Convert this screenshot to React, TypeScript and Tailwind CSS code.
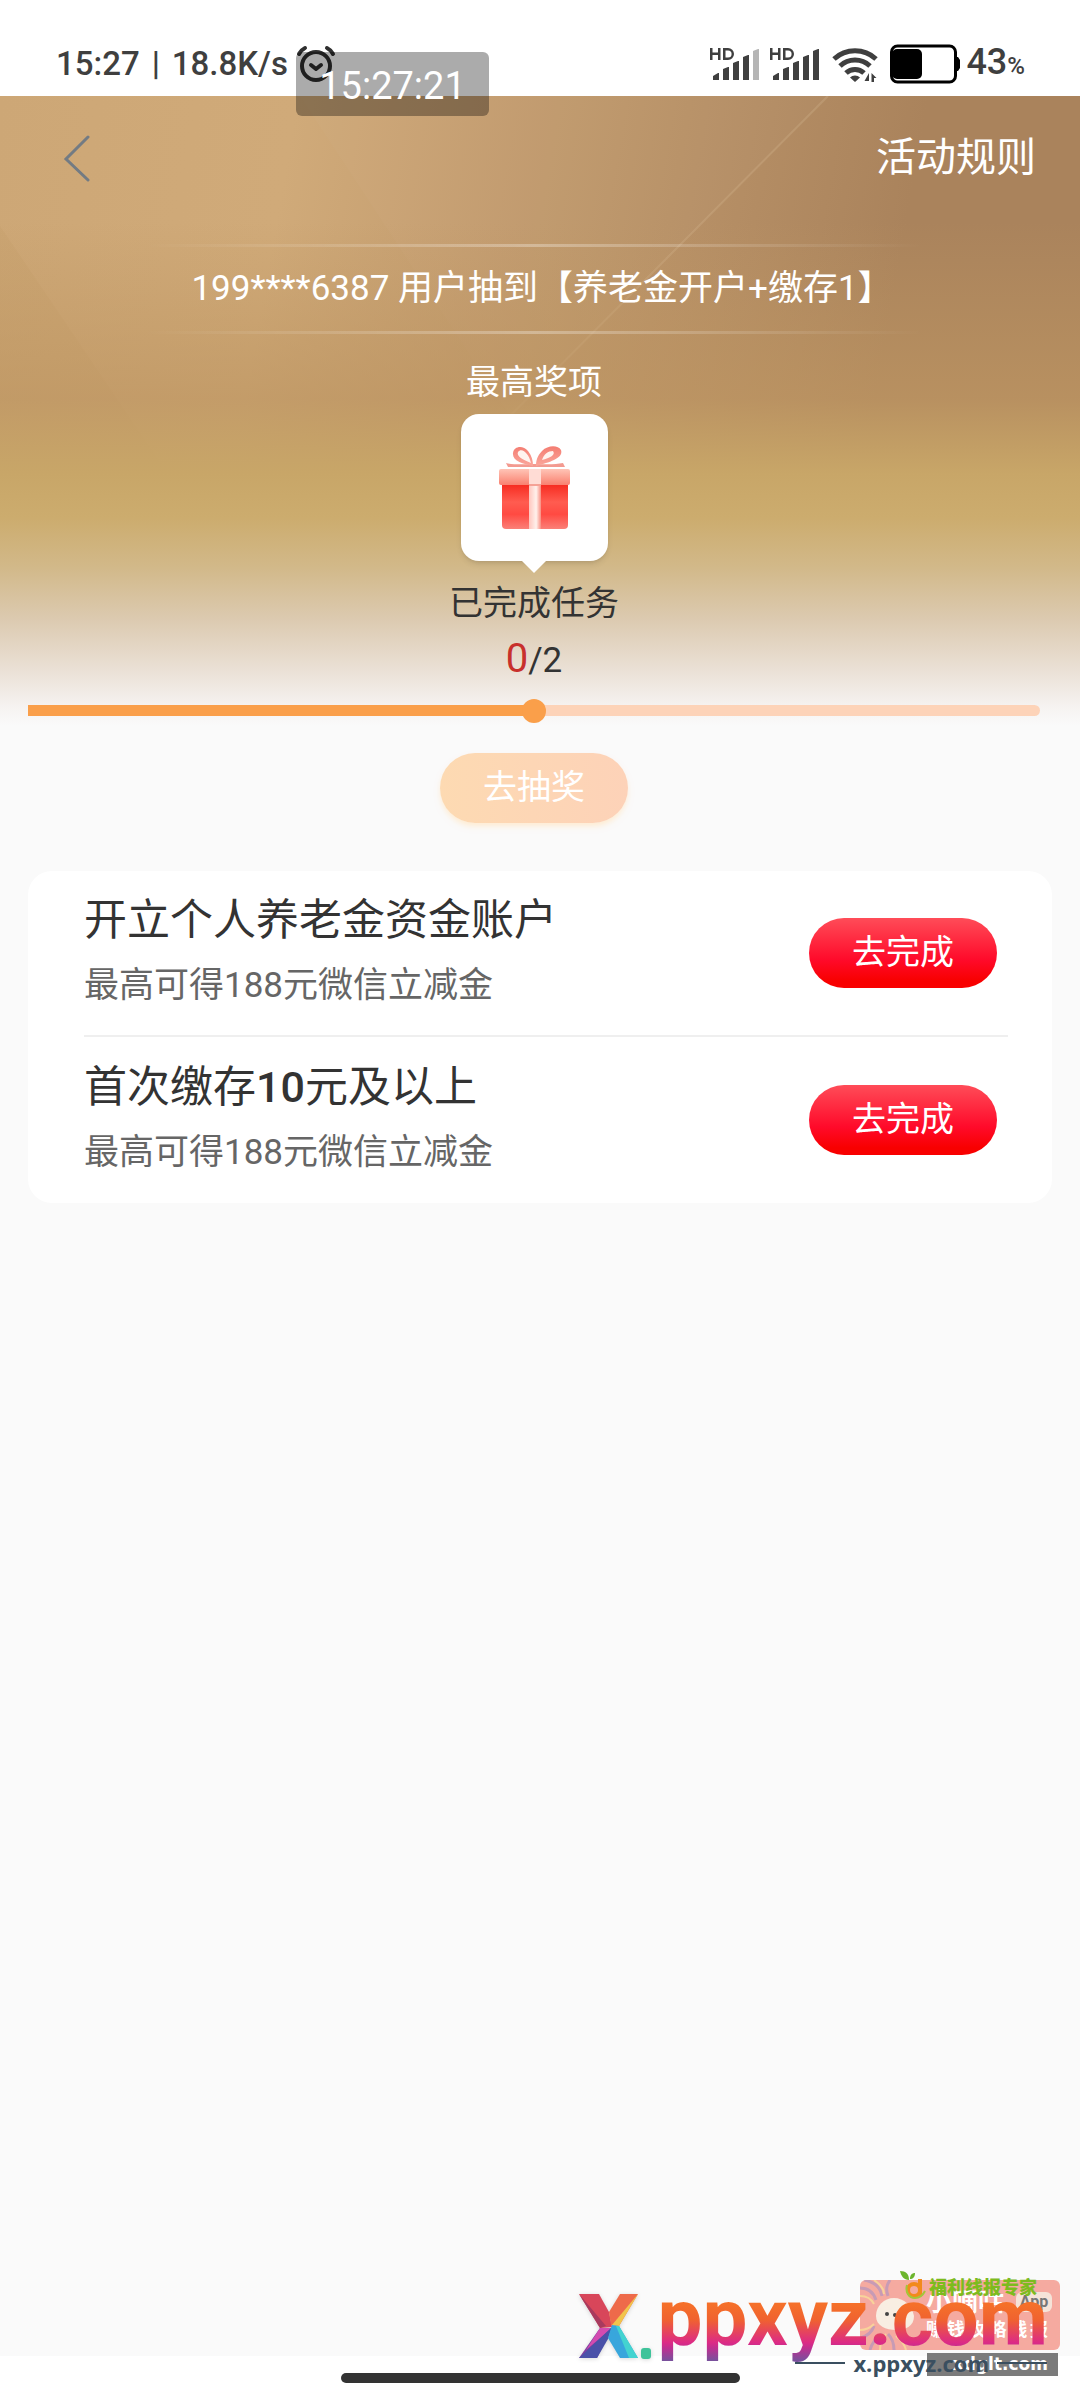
const TASKS = [
  { title: ["开立个人养老金资金账户"], reward: "最高可得188元微信立减金" },
  { title: ["首次缴存", "10", "元及以上"], reward: "最高可得188元微信立减金" },
];

const AlarmIcon = () => (
  <svg className="w-10 h-10" viewBox="0 0 40 40" fill="none" stroke="#2f2f2f" strokeWidth="4" strokeLinecap="round">
    <circle cx="20" cy="22" r="14" />
    <path d="M3 10q2-4 6-6M37 10q-2-4-6-6" />
    <path d="m15 21 5 4 5-4" strokeLinejoin="round" />
  </svg>
);

const SignalIcon = ({ weak = false }: { weak?: boolean }) => (
  <svg className="w-[50px] h-9" viewBox="0 0 50 36" fill="#3f3f3f">
    <path d="M0 2h2.500v4.500H8V2h2.500v12H8V9H2.500v5H0zM13 2h5a6 6 0 0 1 0 12h-5zM15.500 4.400v7.200H18a3.600 3.600 0 0 0 0-7.200z" fillRule="evenodd" />
    <path d="M3 34v-4l5-3h1v7zM13 23l5-2h1v13h-6zM23 17l5-2h1v19h-6zM33 11l5-2h1v25h-6z" />
    <path d="M43 5l5-2h1v31h-6z" fill={weak ? "#b5b5b5" : "#3f3f3f"} />
  </svg>
);

const WifiIcon = () => (
  <svg className="w-[46px] h-9" viewBox="0 0 46 36" fill="none" stroke="#3f3f3f" strokeWidth="5">
    <path d="M2 13a31 31 0 0 1 42 0" />
    <path d="M8 20a22 22 0 0 1 30 0" />
    <path d="M14 27a13 13 0 0 1 18 0" />
    <path d="M18 31.500a7 7 0 0 1 10 0L23 36z" fill="#3f3f3f" stroke="none" />
    <path d="M37 27v8h-4.500zM39.500 36v-9l5 5h-2.500v4z" fill="#3f3f3f" stroke="none" />
  </svg>
);

const BatteryIcon = () => (
  <svg className="w-[70px] h-10" viewBox="0 0 70 40">
    <rect x="1.500" y="2" width="64" height="36" rx="6" fill="#fff" stroke="#000" strokeWidth="3" />
    <rect x="2" y="5" width="30" height="30" rx="5" fill="#000" />
    <path d="M66 13h2l2 3v8l-2 3h-2z" />
  </svg>
);

const GiftIcon = () => (
  <svg className="w-[73px] h-[84px]" viewBox="0 0 73 84">
    <defs>
      <linearGradient id="box" x1="0" y1="0" x2="0" y2="1">
        <stop offset="0" stopColor="#f41f14" />
        <stop offset=".45" stopColor="#ff5c50" />
        <stop offset=".7" stopColor="#ff4a42" />
        <stop offset="1" stopColor="#fb8078" />
      </linearGradient>
      <linearGradient id="lid" x1="0" y1="0" x2="0" y2="1">
        <stop offset="0" stopColor="#ffc4b6" />
        <stop offset="1" stopColor="#f9806f" />
      </linearGradient>
      <linearGradient id="ribbon" x1="0" y1="0" x2="1" y2="0">
        <stop offset="0" stopColor="#ffc6be" />
        <stop offset=".6" stopColor="#fff1ec" />
        <stop offset="1" stopColor="#f98d80" />
      </linearGradient>
      <linearGradient id="bow" x1="0" y1="0" x2="0" y2="1">
        <stop offset="0" stopColor="#f47d72" />
        <stop offset="1" stopColor="#fba79c" />
      </linearGradient>
    </defs>
    <path d="M8 17c9 2 20 1 28 1s20 1 29-1l2 4H10z" fill="#f39a90" />
    <path d="M35 20C25 18 14 15 15 7 16 0 25-1 30 5c4 5 5 10 5 15zM38 20c0-5 1-10 6-15 6-6 16-6 19-1 3 9-15 13-25 16z" fill="url(#bow)" />
    <path d="M33 17C25 14 18 10 20 6c4-5 11 2 13 11zM44 14c2-6 6-9 11-9 3 4-3 7-11 9z" fill="#fff3ef" />
    <rect x="4" y="34" width="66" height="49" rx="4" fill="url(#box)" />
    <rect x="1" y="23" width="71" height="16" rx="2" fill="url(#lid)" />
    <rect x="31" y="23" width="12" height="60" fill="url(#ribbon)" />
    <rect x="31" y="23" width="12" height="16" fill="#ffdcd5" />
    <path d="M31 38h12v2H31z" fill="#f5a296" />
  </svg>
);

const StatusBar = () => (
  <div className="relative h-24 pt-8 pl-14 pr-[55px] flex items-center justify-between bg-white text-[#3f3f3f] font-medium">
    <div className="flex items-center text-[33px] leading-10">
      <span>15:27</span>
      <span className="w-8 text-center">|</span>
      <span>18.8K/s</span>
      <span className="ml-2">
        <AlarmIcon />
      </span>
    </div>
    <div className="flex items-center">
      <SignalIcon weak />
      <span className="ml-[10px] mr-3">
        <SignalIcon />
      </span>
      <WifiIcon />
      <span className="ml-3 mr-[6px]">
        <BatteryIcon />
      </span>
      <span className="text-[36px] leading-10">
        43<span className="text-[24px]">%</span>
      </span>
    </div>
    <div className="absolute z-10 left-[296px] top-[52px] w-[193px] h-16 pt-1 rounded-md bg-black/33 flex items-center justify-center text-[38px] font-normal text-white">
      15:27:21
    </div>
  </div>
);

const HeroBackdrop = () => (
  <div className="absolute inset-x-0 top-0 h-[630px] bg-[linear-gradient(100deg,#cda776_0%,#d0aa79_25%,#b89167_58%,#aa835c_78%,#aa835c_100%)]">
    <svg className="absolute inset-0 w-full h-full" viewBox="0 0 1080 630" preserveAspectRatio="none">
      <path d="M828 0 510 320 300 0z" fill="#fff" opacity=".02" />
      <path d="M828 0 510 320" stroke="#e6cda8" strokeWidth="2" opacity=".2" />
      <path d="M0 130 230 470H0z" fill="#a87c48" opacity=".07" />
    </svg>
    <div className="absolute inset-0 bg-[linear-gradient(180deg,rgba(190,150,98,0)_20%,rgba(190,150,98,0.7)_48%,#c8a668_60%,#ccac6e_67%,#d2b98a_75%,#dccab0_83%,#eae0d5_91%,#f6f3f1_97%,#fafafa_100%)]" />
  </div>
);

const Watermarks = () => (
  <div className="absolute right-0 bottom-0 w-[520px] h-[150px]">
    <div className="absolute right-5 top-[30px] w-[200px] h-[70px] rounded-md bg-[#f5aaa0] overflow-hidden text-white font-bold">
      <svg className="absolute left-0 top-0 w-16 h-full" viewBox="0 0 64 70" fill="none">
        <g stroke="#c79bb5" strokeWidth="3">
          <path d="M0 8c10 0 14 6 16 12M4 0c10 2 16 6 18 16M30 0c-4 6-4 10-2 16M0 58c8-2 12-6 14-12M10 70c2-8 6-12 12-16M34 70c0-8-2-12-6-16" />
        </g>
        <g stroke="#f8d39a" strokeWidth="2">
          <path d="M0 16c8 0 12 4 14 8M14 0c6 4 10 8 10 14M0 50c6 0 10-2 14-6M20 70c0-6 2-12 6-16M46 70c-2-8-6-10-10-14" />
        </g>
        <path d="M16 36c0-10 8-18 18-18s18 8 20 18c0 10-8 14-18 14S16 46 16 36z" fill="#f8eee2" />
        <circle cx="27" cy="34" r="2" fill="#444" />
        <circle cx="35" cy="35" r="2" fill="#444" />
      </svg>
      <div className="absolute left-[66px] top-2 flex items-center gap-3">
        <span className="text-[26px] leading-7">小嘀咕</span>
        <span className="w-9 h-5 rounded-md bg-[#f5e3d8] text-[#777] text-base leading-5 text-center">App</span>
      </div>
      <div className="absolute left-[66px] top-10 w-[122px] flex justify-between text-lg leading-5">
        {[..."赚钱攻略线报"].map((char) => (
          <span key={char}>{char}</span>
        ))}
      </div>
    </div>

    <div className="absolute right-[22px] top-[103px] w-[131px] h-[23px] pr-[10px] bg-[#7b7b7b] font-['DejaVu_Sans'] font-bold text-[17px] leading-[22px] text-right text-white">
      xdglt.com
    </div>

    <svg className="absolute left-[339px] top-5 w-7 h-[30px]" viewBox="0 0 28 30" fill="none">
      <path d="M1 1c6 0 9 3 9 9C5 10 2 6 1 1zM11 9c0-4 2-6 5-6 0 4-2 6-5 6z" fill="#6cb52d" />
      <circle cx="15" cy="20" r="6" stroke="#f28a1c" strokeWidth="4" />
      <path d="M21 9v17" stroke="#f28a1c" strokeWidth="4" />
      <path d="M8 15c-2 7 2 13 8 13 5 0 8-3 10-7" stroke="#a3c63a" strokeWidth="2" />
    </svg>
    <div className="absolute left-[369px] top-7 text-[18px] leading-5 font-black text-[#7dbb1e]">福利线报专家</div>

    <svg className="absolute left-[18px] top-[43px] w-[74px] h-[68px] drop-shadow-sm" viewBox="0 0 74 68">
      <path d="M1 1h20l10 18 3 15-12 1z" fill="#d8465a" />
      <path d="M1 1l21 34 6-2z" fill="#a83a5e" />
      <path d="M42 1h18L41 33l-8-1-2-13z" fill="#ee6a4a" />
      <path d="M60 1 41 33l-7-1z" fill="#f1c44c" />
      <path d="M22 35h12L19 65H1z" fill="#7d3fa0" />
      <path d="M22 35h12L8 57z" fill="#d34bb0" />
      <path d="M34 34 30 46 19 65H1z" fill="#4a51a8" />
      <path d="m34 32 7 1 19 32H42L30 45z" fill="#38a6dc" />
      <path d="m38 33 3 0 19 32h-9z" fill="#43d3d0" />
      <rect x="63" y="55" width="10" height="11" rx="3" fill="#3fc39a" />
    </svg>
    <div className="absolute right-[32px] top-6 text-[80px] leading-[88px] font-bold text-transparent bg-clip-text bg-[linear-gradient(180deg,#f5702a_35%,#f0622f_52%,#dc2a86_78%,#c02f90_84%,#7a509c_98%)]">
      ppxyz.com
    </div>

    <div className="absolute right-[33px] top-[99px] flex items-center gap-2 text-[#3a4f60]">
      <span className="w-[50px] h-[2px] bg-[#3a4f60]" />
      <span className="font-['Open_Sans'] font-bold text-[22px] leading-7">x.ppxyz.com</span>
      <span className="w-[50px] h-[2px] bg-[#3a4f60]" />
    </div>
  </div>
);

export default function App() {
  return (
    <div className="min-h-screen flex flex-col bg-[#fafafa] font-['Roboto','Noto_Sans_CJK_SC',sans-serif] text-[#333]">
      <StatusBar />

      <main className="relative flex-1">
        <HeroBackdrop />

        <div className="relative">
          <header className="h-[124px] pl-[60px] pr-11 flex items-center justify-between">
            <button type="button" aria-label="返回">
              <svg className="w-8 h-12" viewBox="0 0 32 48" fill="none" stroke="#737b83" strokeWidth="3" strokeLinecap="round">
                <path d="M28 3 6 25l22 21" />
              </svg>
            </button>
            <button type="button" className="text-[40px] leading-[56px] text-white">活动规则</button>
          </header>

          <section className="pl-7 pr-10 flex flex-col items-center">
            <div className="mt-6 w-[780px] text-center text-[35px] leading-[84px] text-white">
              <div className="h-[3px] bg-[linear-gradient(90deg,transparent,rgba(255,255,255,0.3)_50%,transparent)]" />
              <p className="h-[84px] pl-4">199****6387 用户抽到【养老金开户+缴存1】</p>
              <div className="h-[3px] bg-[linear-gradient(90deg,transparent,rgba(255,255,255,0.3)_50%,transparent)]" />
            </div>

            <h2 className="mt-6 text-[34px] leading-[48px] text-white">最高奖项</h2>
            <div className="relative mt-2 size-[147px] rounded-[18px] bg-white shadow-md flex items-center justify-center">
              <GiftIcon />
              <svg className="absolute -bottom-3 w-[26px] h-[13px]" viewBox="0 0 26 13">
                <path d="M0 0h26L13 13z" fill="#fff" />
              </svg>
            </div>

            <p className="mt-[18px] text-[34px] leading-[48px]">已完成任务</p>
            <p className="mt-2 text-[35px] leading-[48px]">
              <span className="text-[40px] text-[#c8302c]">0</span>/2
            </p>

            <div className="relative mt-5 w-full h-[11px] rounded-r-full bg-[#fdd3b8]">
              <div className="w-1/2 h-full bg-[#fa9f4a]" />
              <span className="absolute left-1/2 top-1/2 -translate-x-1/2 -translate-y-1/2 size-6 rounded-full bg-[#fa9f4a]" />
            </div>

            <button type="button" className="mt-[37px] w-[188px] h-[70px] pb-[2px] rounded-full bg-linear-to-r from-[#fddab2] to-[#fdd2b8] shadow-md shadow-orange-100 text-[34px] text-white">
              去抽奖
            </button>
          </section>

          <ul className="mt-12 mx-7 pl-14 pr-11 rounded-3xl bg-white divide-y-2 divide-[#efefef]">
            {TASKS.map(({ title: [lead, amount, rest], reward }) => (
              <li key={lead} className="h-[166px] pr-[11px] flex items-center justify-between">
                <div className="flex flex-col gap-[10px]">
                  <h3 className="text-[43px] leading-[56px]">
                    {lead}
                    {amount && <span className="font-medium">{amount}</span>}
                    {rest}
                  </h3>
                  <p className="text-[35px] leading-[56px] text-[#666]">{reward}</p>
                </div>
                <button type="button" className="w-[188px] h-[70px] pb-[2px] rounded-full bg-[linear-gradient(180deg,#ff4c58_0%,#ff0a2a_60%,#f80000_90%)] text-[34px] text-white">
                  去完成
                </button>
              </li>
            ))}
          </ul>
        </div>
      </main>

      <footer className="relative h-11 pt-[17px] bg-white">
        <div className="mx-auto w-[399px] h-[10px] rounded-full bg-[#333]" />
        <Watermarks />
      </footer>
    </div>
  );
}
